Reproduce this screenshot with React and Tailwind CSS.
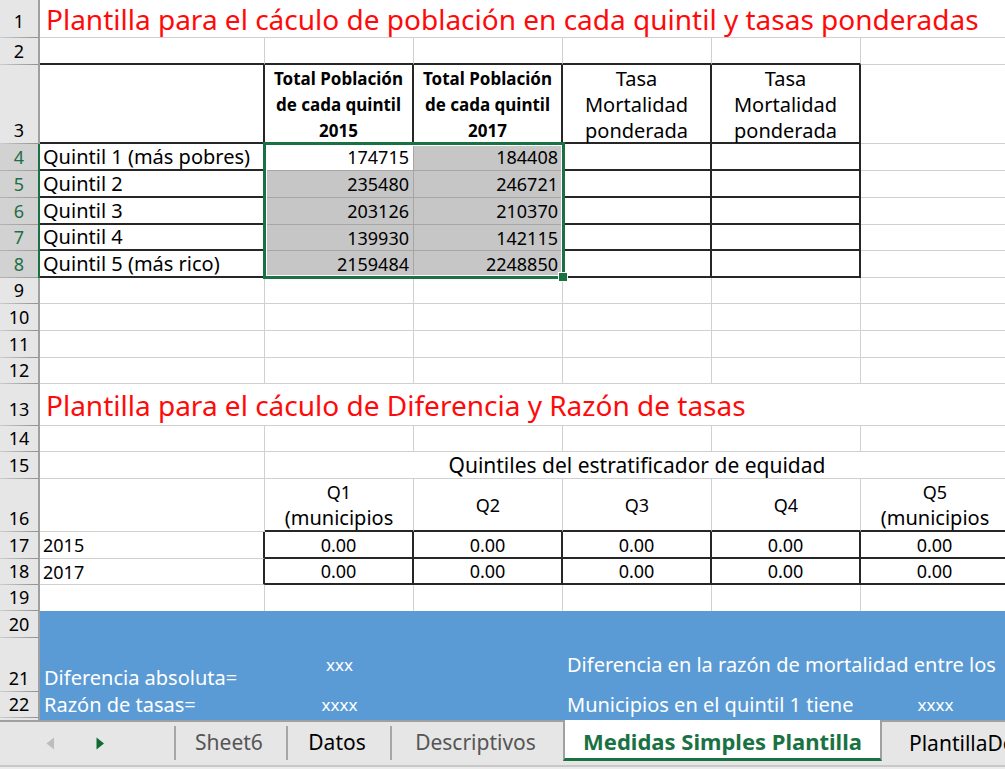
const POPULATION = [
  ['Quintil 1 (más pobres)', 174715, 184408],
  ['Quintil 2', 235480, 246721],
  ['Quintil 3', 203126, 210370],
  ['Quintil 4', 139930, 142115],
  ['Quintil 5 (más rico)', 2159484, 2248850],
]

const H26 = 'h-[26px]'
const H27 = 'h-[27px]'

const GRAY_R = 'border-r border-r-[#d0d0d0]'
const GRAY_B = 'border-b border-b-[#d0d0d0]'
const BLACK_R = 'border-r-2 border-r-[#262626]'
const BLACK_B = 'border-b-2 border-b-[#262626]'

function RowHead({ n, selected, tall }) {
  const base =
    'border-r-2 bg-[length:100%_1px] bg-bottom bg-no-repeat p-0 align-bottom text-[18px] font-normal'
  const tone = selected
    ? 'border-r-[#1a7243] bg-[#d2d2d2] text-[#1f6e46] bg-[linear-gradient(to_right,#b4b4b4,#9a9a9a)]'
    : 'border-r-[#a0a0a0] bg-[#e6e6e6] text-black bg-[linear-gradient(to_right,#cccccc,#909090)]'
  return (
    <th scope="row" className={`${base} ${tone}`}>
      <div className={`leading-6 ${tall ? 'pb-[5px]' : 'pb-0.5'}`}>{n}</div>
    </th>
  )
}

function Cell({ className = '', children, ...rest }) {
  return (
    <td className={`whitespace-nowrap p-0 leading-6 ${className}`} {...rest}>
      {children}
    </td>
  )
}

function EmptyRow({ n, height, bottoms }) {
  return (
    <tr className={height}>
      <RowHead n={n} />
      {[0, 1, 2, 3, 4, 5].map((i) => (
        <Cell key={i} className={`${GRAY_R} ${bottoms ? bottoms[i] : GRAY_B}`} />
      ))}
      <Cell className={GRAY_B} />
    </tr>
  )
}

function TitleRow({ n, height, children }) {
  return (
    <tr className={height}>
      <RowHead n={n} tall />
      <Cell colSpan={7} className={`${GRAY_B} pl-[6px] text-[28px] text-[#ff0a0a]`}>
        <h2>{children}</h2>
      </Cell>
    </tr>
  )
}

function Selection() {
  return (
    <div className="pointer-events-none absolute -left-[2px] -top-[2px] z-10 h-[137px] w-[302px] border-[3px] border-[#1a7243] shadow-[inset_0_0_0_1px_#ffffff]">
      <div className="absolute -bottom-[6px] -right-[6px] size-[10px] border border-white bg-[#1a7243]" />
    </div>
  )
}

function PopulationRow({ n, height, data, first, last }) {
  const [label, a, b] = data
  const line = last ? BLACK_B : 'border-b border-b-[#a6a6a6]'
  return (
    <tr className={height}>
      <RowHead n={n} selected />
      <Cell className={`${BLACK_R} ${BLACK_B} pl-[3px] text-[20px]`}>{label}</Cell>
      <Cell
        className={`relative border-r border-r-[#a6a6a6] pr-[4px] text-right text-[18px] ${line} ${first ? 'bg-white' : 'bg-[#c6c6c6]'}`}
      >
        {a}
        {first && <Selection />}
      </Cell>
      <Cell className={`${BLACK_R} ${line} bg-[#c6c6c6] pr-[3px] text-right text-[18px]`}>{b}</Cell>
      <Cell className={`${BLACK_R} ${BLACK_B}`} />
      <Cell className={`${BLACK_R} ${BLACK_B}`} />
      <Cell className={`${GRAY_R} ${GRAY_B}`} />
      <Cell className={GRAY_B} />
    </tr>
  )
}

function ColumnTitle({ bold, lines }) {
  return (
    <th
      scope="col"
      className={`${BLACK_R} ${BLACK_B} p-0 align-top ${bold ? 'text-[17px] font-bold' : 'text-[20px] font-normal'}`}
    >
      <div className="mt-px h-[76px] whitespace-nowrap leading-[26px]">
        {lines.map((l) => (
          <div key={l}>{l}</div>
        ))}
      </div>
    </th>
  )
}

function QuintileTitle({ name, note }) {
  return (
    <th scope="col" className={`${GRAY_R} ${BLACK_B} p-0 font-normal`}>
      <div className={`whitespace-nowrap leading-[26px] ${note ? 'h-[51px]' : ''}`}>
        <div className="text-[18px]">{name}</div>
        {note && <div className="text-[20px]">{note}</div>}
      </div>
    </th>
  )
}

function YearRow({ n, year, height }) {
  return (
    <tr className={height}>
      <RowHead n={n} />
      <Cell className={`${BLACK_R} ${GRAY_B} pl-[3px] text-[18px]`}>{year}</Cell>
      {[1, 2, 3, 4, 5].map((q) => (
        <Cell key={q} className={`${BLACK_R} ${BLACK_B} text-center text-[18px]`}>
          0.00
        </Cell>
      ))}
      <Cell className={GRAY_B} />
    </tr>
  )
}

function Sheet() {
  const blue = 'bg-[#5b9bd5] text-white'
  return (
    <table className="w-full table-fixed border-separate border-spacing-0">
      <colgroup>
        <col className="w-[40px]" />
        <col className="w-[225px]" />
        <col className="w-[149px]" />
        <col className="w-[149px]" />
        <col className="w-[149px]" />
        <col className="w-[149px]" />
        <col className="w-[149px]" />
        <col />
      </colgroup>
      <tbody>
        <TitleRow n={1} height="h-[38px]">
          Plantilla para el cáculo de población en cada quintil y tasas ponderadas
        </TitleRow>
        <EmptyRow n={2} height={H27} bottoms={[BLACK_B, BLACK_B, BLACK_B, BLACK_B, BLACK_B, GRAY_B]} />
        <tr className="h-[79px]">
          <RowHead n={3} />
          <Cell className={`${BLACK_R} ${BLACK_B}`} />
          <ColumnTitle bold lines={['Total Población', 'de cada quintil', '2015']} />
          <ColumnTitle bold lines={['Total Población', 'de cada quintil', '2017']} />
          <ColumnTitle lines={['Tasa', 'Mortalidad', 'ponderada']} />
          <ColumnTitle lines={['Tasa', 'Mortalidad', 'ponderada']} />
          <Cell className={`${GRAY_R} ${GRAY_B}`} />
          <Cell className={GRAY_B} />
        </tr>
        {POPULATION.map((row, i) => (
          <PopulationRow
            key={row[0]}
            n={i + 4}
            height={i === 3 ? H26 : H27}
            data={row}
            first={i === 0}
            last={i === 4}
          />
        ))}
        <EmptyRow n={9} height={H26} />
        <EmptyRow n={10} height={H27} />
        <EmptyRow n={11} height={H27} />
        <EmptyRow n={12} height={H26} />
        <TitleRow n={13} height="h-[42px]">
          Plantilla para el cáculo de Diferencia y Razón de tasas
        </TitleRow>
        <EmptyRow n={14} height={H26} />
        <tr className={H27}>
          <RowHead n={15} />
          <Cell className={`${GRAY_R} ${GRAY_B}`} />
          <Cell colSpan={5} className={`${GRAY_R} ${GRAY_B} text-center text-[21px]`}>
            Quintiles del estratificador de equidad
          </Cell>
          <Cell className={GRAY_B} />
        </tr>
        <tr className="h-[53px]">
          <RowHead n={16} />
          <Cell className={`${GRAY_R} ${GRAY_B}`} />
          <QuintileTitle name="Q1" note="(municipios" />
          <QuintileTitle name="Q2" />
          <QuintileTitle name="Q3" />
          <QuintileTitle name="Q4" />
          <QuintileTitle name="Q5" note="(municipios" />
          <Cell className={GRAY_B} />
        </tr>
        <YearRow n={17} year={2015} height={H27} />
        <YearRow n={18} year={2017} height={H26} />
        <EmptyRow n={19} height={H26} bottoms={['', '', '', '', '', '']} />
        <tr className={H27}>
          <RowHead n={20} />
          <Cell colSpan={7} className={blue} />
        </tr>
        <tr className="h-[54px]">
          <RowHead n={21} />
          <Cell className={`${blue} pl-[4px] align-bottom text-[20px]`}>
            <div className="pb-0.5">Diferencia absoluta=</div>
          </Cell>
          <Cell className={`${blue} text-center text-[17px]`}>xxx</Cell>
          <Cell className={blue} />
          <Cell colSpan={4} className={`${blue} overflow-hidden pl-[4px] text-[20px]`}>
            Diferencia en la razón de mortalidad entre los
          </Cell>
        </tr>
        <tr className={H26}>
          <RowHead n={22} />
          <Cell className={`${blue} pl-[4px] text-[20px]`}>Razón de tasas=</Cell>
          <Cell className={`${blue} text-center text-[17px]`}>xxxx</Cell>
          <Cell className={blue} />
          <Cell colSpan={2} className={`${blue} overflow-hidden pl-[4px] text-[20px]`}>
            Municipios en el quintil 1 tiene
          </Cell>
          <Cell className={`${blue} text-center text-[17px]`}>xxxx</Cell>
          <Cell className={blue} />
        </tr>
        <tr className="h-[2px]">
          <td className="border-r-2 border-r-[#a0a0a0] bg-[#e6e6e6] p-0" />
          <td colSpan={7} className={`${blue} p-0`} />
        </tr>
      </tbody>
    </table>
  )
}

function Tab({ className = '', children }) {
  return (
    <button
      type="button"
      className={`my-1 h-[34px] shrink-0 whitespace-nowrap border-l-2 border-[#a6a6a6] pb-0.5 pr-1 text-[21px] leading-7 ${className}`}
    >
      {children}
    </button>
  )
}

function TabBar() {
  return (
    <nav
      aria-label="Hojas"
      className="flex h-[47px] items-start overflow-hidden border-b-2 border-[#c8c8c8] bg-[#e6e6e6]"
    >
      <div className="flex h-full w-[174px] shrink-0 items-center border-t-2 border-[#a0a0a0] pl-[46px]">
        <button type="button" aria-label="Hoja anterior" className="mr-[42px] flex h-6 items-center">
          <svg width="8" height="13" viewBox="0 0 8 13">
            <path d="M8 0.5V12.5L0.5 6.5Z" fill="#bdbdbd" />
          </svg>
        </button>
        <button type="button" aria-label="Hoja siguiente" className="flex h-6 items-center">
          <svg width="8" height="13" viewBox="0 0 8 13">
            <path d="M0.5 0.5V12.5L8 6.5Z" fill="#0f6b33" />
          </svg>
        </button>
      </div>
      <div className="flex h-full shrink-0 border-t-2 border-[#a0a0a0]">
        <Tab className="w-[112px] text-[#555555]">Sheet6</Tab>
        <Tab className="w-[104px] text-black">Datos</Tab>
        <Tab className="w-[173px] text-[#555555]">Descriptivos</Tab>
      </div>
      <button
        type="button"
        aria-current="page"
        className="h-[41px] w-[319px] shrink-0 whitespace-nowrap border-x-2 border-b-[3px] border-x-[#a0a0a0] border-b-[#1a7243] bg-white pt-1 text-[22px] font-bold leading-8 text-[#1a7243]"
      >
        Medidas Simples Plantilla
      </button>
      <div className="flex h-full flex-1 border-t-2 border-[#a0a0a0]">
        <button type="button" className="h-[41px] whitespace-nowrap pl-[27px] text-[21px] leading-7 text-black">
          PlantillaDe
        </button>
      </div>
    </nav>
  )
}

export default function App() {
  return (
    <main className="min-h-screen overflow-hidden bg-[#ececec] font-['Noto_Sans',sans-serif] text-black">
      <div className="overflow-hidden bg-white">
        <Sheet />
      </div>
      <TabBar />
    </main>
  )
}
